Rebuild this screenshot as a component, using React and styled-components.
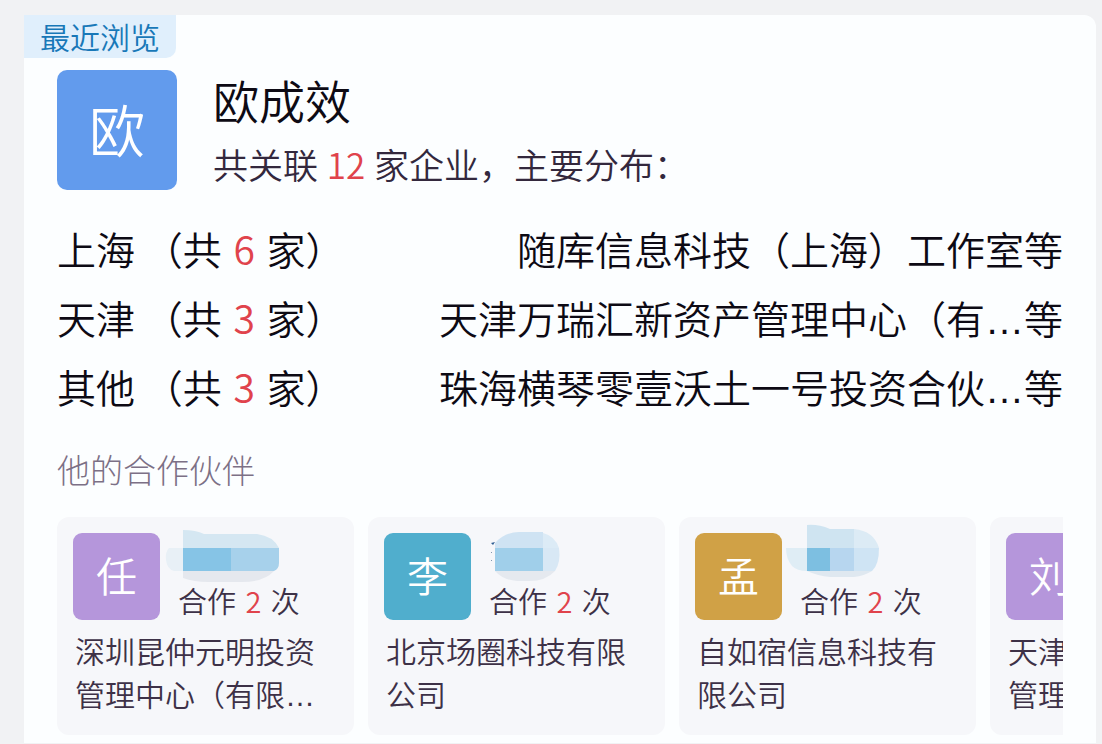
import React from "react";
import styled, { createGlobalStyle } from "styled-components";

const GlobalStyle = createGlobalStyle`
  *, *::before, *::after { box-sizing: border-box; }
  body {
    margin: 0;
    background: #f1f2f4;
    color: #0d0a14;
    font-family: "Noto Sans CJK SC", sans-serif;
    font-weight: 350;
  }
  h1, h2, p, ul { margin: 0; padding: 0; font-weight: inherit; }
  ul { list-style: none; }
`;

const Page = styled.div`
  padding: 15px 6px 1px 24px;
`;

const Panel = styled.main`
  background: #fcfeff;
  border-radius: 0 12px 0 0;
`;

const Tag = styled.span`
  display: block;
  width: fit-content;
  height: 43px;
  padding: 0 16px;
  border-radius: 0 0 10px 0;
  background: #e0effc;
  color: #1878b8;
  font-size: 30px;
  line-height: 42px;
`;

const Content = styled.div`
  padding: 12px 33px 8px;
`;

const Profile = styled.header`
  display: flex;
  gap: 36px;
`;

const Avatar = styled.div`
  display: flex;
  flex: none;
  align-items: center;
  justify-content: center;
  width: ${(p) => (p.$large ? 120 : 87)}px;
  height: ${(p) => (p.$large ? 120 : 87)}px;
  padding-bottom: 4px;
  border-radius: ${(p) => (p.$large ? 10 : 9)}px;
  background: ${(p) => p.$color};
  color: #fff;
  font-size: ${(p) => (p.$large ? 56 : 41)}px;
  line-height: 1;
`;

const Name = styled.h1`
  font-size: 46px;
  line-height: 58px;
`;

const Summary = styled.p`
  color: #33283d;
  font-size: 35px;
  line-height: 72px;
`;

const Count = styled.span`
  margin: 0 ${(p) => p.$gap ?? 3}px;
  color: #e0434c;
`;

const Regions = styled.ul`
  margin-top: 14px;
`;

const Region = styled.li`
  display: flex;
  justify-content: space-between;
  font-size: 39px;
  line-height: 69px;
  white-space: nowrap;
`;

const Dots = styled.span`
  font-family: "Liberation Sans", sans-serif;
  line-height: 1;
`;

const SectionTitle = styled.h2`
  margin-top: 24px;
  color: #7c7086;
  font-size: 33px;
  font-weight: 300;
  line-height: 48px;
`;

const Partners = styled.ul`
  display: flex;
  gap: 14px;
  margin-top: 24px;
  overflow: hidden;
`;

const Partner = styled.li`
  flex: none;
  width: 297px;
  padding: 16px 16px 20px;
  border-radius: 12px;
  background: #f6f7fa;
  color: #3d3147;
`;

const PartnerHead = styled.div`
  display: flex;
`;

const MaskedName = styled.svg`
  display: block;
  width: 124px;
  height: 48px;
  overflow: visible;
`;

const Times = styled.p`
  padding-left: 18px;
  font-size: 29px;
  line-height: 39px;
`;

const Company = styled.p`
  margin-top: 9px;
  padding: 0 2px;
  font-size: 30px;
  line-height: 43px;
`;

const regions = [
  { place: "上海", count: 6, company: "随库信息科技（上海）工作室" },
  { place: "天津", count: 3, company: "天津万瑞汇新资产管理中心（有", cut: true },
  { place: "其他", count: 3, company: "珠海横琴零壹沃土一号投资合伙", cut: true },
];

const partners = [
  {
    initial: "任",
    color: "#b596db",
    lines: ["深圳昆仲元明投资", "管理中心（有限"],
    cut: true,
    mask: (
      <>
        <path d="M23 15H9Q5 19 6 27Q7 36 14 38H23Z" fill="#e8f0f6" />
        <path d="M23 15V-3Q36-3 44 1H97Q113 3 119 15Z" fill="#d5e7f2" />
        <path d="M23 15H71V38H23Z" fill="#86c4e6" />
        <path d="M71 15H119V30Q119 36 114 38H71Z" fill="#a7d1eb" />
        <path d="M23 38H114Q104 49 82 49H48Q34 49 23 45Z" fill="#e5e8ee" />
      </>
    ),
  },
  {
    initial: "李",
    color: "#50aecd",
    lines: ["北京场圈科技有限", "公司"],
    mask: (
      <>
        <path d="M24 15V10Q34-1 48-1H72V15Z" fill="#cfe3f3" />
        <path d="M72 15V0Q84 3 88 15Z" fill="#dcebf6" />
        <path d="M24 15H72V38H24Z" fill="#a0cfea" />
        <path d="M72 15H88Q90 29 84 38H72Z" fill="#d8e8f5" />
        <path d="M24 38H84Q75 48 58 48H46Q32 47 24 38Z" fill="#e5e9ef" />
        <path d="M20 10L24 9L22 12Z" fill="#315f93" />
        <path d="M20 19h1v1h-1zM20 27h1v1h-1z" fill="#8297ad" />
      </>
    ),
  },
  {
    initial: "孟",
    color: "#d0a146",
    lines: ["自如宿信息科技有", "限公司"],
    mask: (
      <>
        <path d="M25 15H4Q4 26 10 33Q15 38 25 38Z" fill="#dfedf5" />
        <path d="M25 15V-8Q36-9 48-4H72V15Z" fill="#cfe4f1" />
        <path d="M72 15V-4Q92-2 97 15Z" fill="#dcebf5" />
        <path d="M25 15H48V38H25Z" fill="#7dbfe1" />
        <path d="M48 15H72V38H48Z" fill="#b7d6ef" />
        <path d="M72 15H97Q97 32 90 38H72Z" fill="#cfe4f4" />
        <path d="M25 38H90Q82 43 72 44H48Q36 43 25 38Z" fill="#dfe8f0" />
      </>
    ),
  },
  {
    initial: "刘",
    color: "#b596db",
    lines: ["天津万瑞汇新资产", "管理中心（有限"],
    cut: true,
    mask: null,
  },
];

export default function App() {
  return (
    <>
      <GlobalStyle />
      <Page>
        <Panel>
          <Tag>最近浏览</Tag>
          <Content>
            <Profile>
              <Avatar $large $color="#629bed">欧</Avatar>
              <div>
                <Name>欧成效</Name>
                <Summary>
                  共关联 <Count $gap={1}>12</Count> 家企业，主要分布：
                </Summary>
              </div>
            </Profile>

            <Regions>
              {regions.map((r) => (
                <Region key={r.place}>
                  <span>
                    {r.place} （共 <Count>{r.count}</Count> 家）
                  </span>
                  <span>
                    {r.company}
                    {r.cut && <Dots>…</Dots>}等
                  </span>
                </Region>
              ))}
            </Regions>

            <SectionTitle>他的合作伙伴</SectionTitle>
            <Partners>
              {partners.map((p) => (
                <Partner key={p.initial}>
                  <PartnerHead>
                    <Avatar $color={p.color}>{p.initial}</Avatar>
                    <div>
                      <MaskedName viewBox="0 0 124 48" aria-hidden="true">
                        {p.mask}
                      </MaskedName>
                      <Times>
                        合作 <Count>2</Count> 次
                      </Times>
                    </div>
                  </PartnerHead>
                  <Company>
                    {p.lines[0]}
                    <br />
                    {p.lines[1]}
                    {p.cut && <Dots>…</Dots>}
                  </Company>
                </Partner>
              ))}
            </Partners>
          </Content>
        </Panel>
      </Page>
    </>
  );
}
